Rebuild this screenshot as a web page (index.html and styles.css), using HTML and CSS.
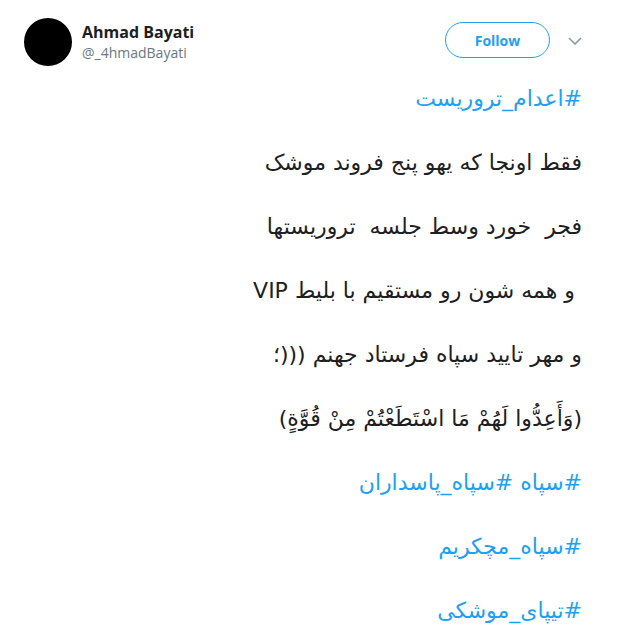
FILE: index.html
```html
<!DOCTYPE html>
<html lang="fa">
<head>
    <meta charset="UTF-8">
    <title>Ahmad Bayati</title>
    <link rel="stylesheet" href="styles.css">
</head>
<body>
    <div class="tweet">
        <div class="tweet-header">
            <div class="avatar"></div>
            <div class="user">
                <p class="user-name">Ahmad Bayati</p>
                <p class="user-handle">@_4hmadBayati</p>
            </div>
            <button class="follow-btn">Follow</button>
            <svg class="caret" width="14" height="8" viewBox="0 0 14 8">
                <path d="M1 1 L7 7 L13 1" fill="none" stroke="#8899a6" stroke-width="1.6"/>
            </svg>
        </div>

        <div class="tweet-text" dir="rtl">
            <p class="line tag">#اعدام_تروریست</p>
            <p class="line">فقط اونجا که یهو پنج فروند موشک</p>
            <p class="line">فجر&nbsp; خورد وسط جلسه&nbsp; تروریستها</p>
            <p class="line">&nbsp;و همه شون رو مستقیم با بلیط VIP</p>
            <p class="line">و مهر تایید سپاه فرستاد جهنم (((؛</p>
            <p class="line">(وَأَعِدُّوا لَهُمْ مَا اسْتَطَعْتُمْ مِنْ قُوَّةٍ)</p>
            <p class="line tag">#سپاه #سپاه_پاسداران</p>
            <p class="line tag">#سپاه_مچکریم</p>
            <p class="line tag">#تیپای_موشکی</p>
        </div>
    </div>
</body>
</html>
```

FILE: styles.css
```css
:root {
    --text: #1c2022;
    --muted: #697882;
    --blue: #1da1f2;
}

body {
    margin: 0;
    background: #fff;
    font-family: "DejaVu Sans", sans-serif;
    color: var(--text);
}

.tweet {
    width: 622px;
    padding: 18px 0 0;
}

.tweet-header {
    display: flex;
    align-items: flex-start;
    padding: 0 40px 0 24px;
}

.avatar {
    width: 48px;
    height: 48px;
    border-radius: 50%;
    background: #000;
    flex-shrink: 0;
}

.user {
    margin-left: 10px;
    padding-top: 4px;
    flex: 1;
}

.user-name {
    margin: 0;
    font-family: "Open Sans", sans-serif;
    font-weight: 700;
    font-size: 16px;
    line-height: 20px;
}

.user-handle {
    margin: 2px 0 0;
    font-family: "Open Sans", sans-serif;
    font-size: 14px;
    line-height: 17px;
    color: var(--muted);
}

.follow-btn {
    margin-top: 4px;
    width: 105px;
    height: 36px;
    border: 1px solid var(--blue);
    border-radius: 18px;
    background: #fff;
    color: var(--blue);
    font-family: "Open Sans", sans-serif;
    font-weight: 700;
    font-size: 14px;
    padding: 0;
}

.caret {
    margin: 19px 0 0 18px;
}

.tweet-text {
    padding: 1px 40px 0 0;
}

.line {
    margin: 0;
    font-size: 22px;
    line-height: 64px;
    height: 64px;
    white-space: nowrap;
}

.tag {
    color: var(--blue);
}
```
